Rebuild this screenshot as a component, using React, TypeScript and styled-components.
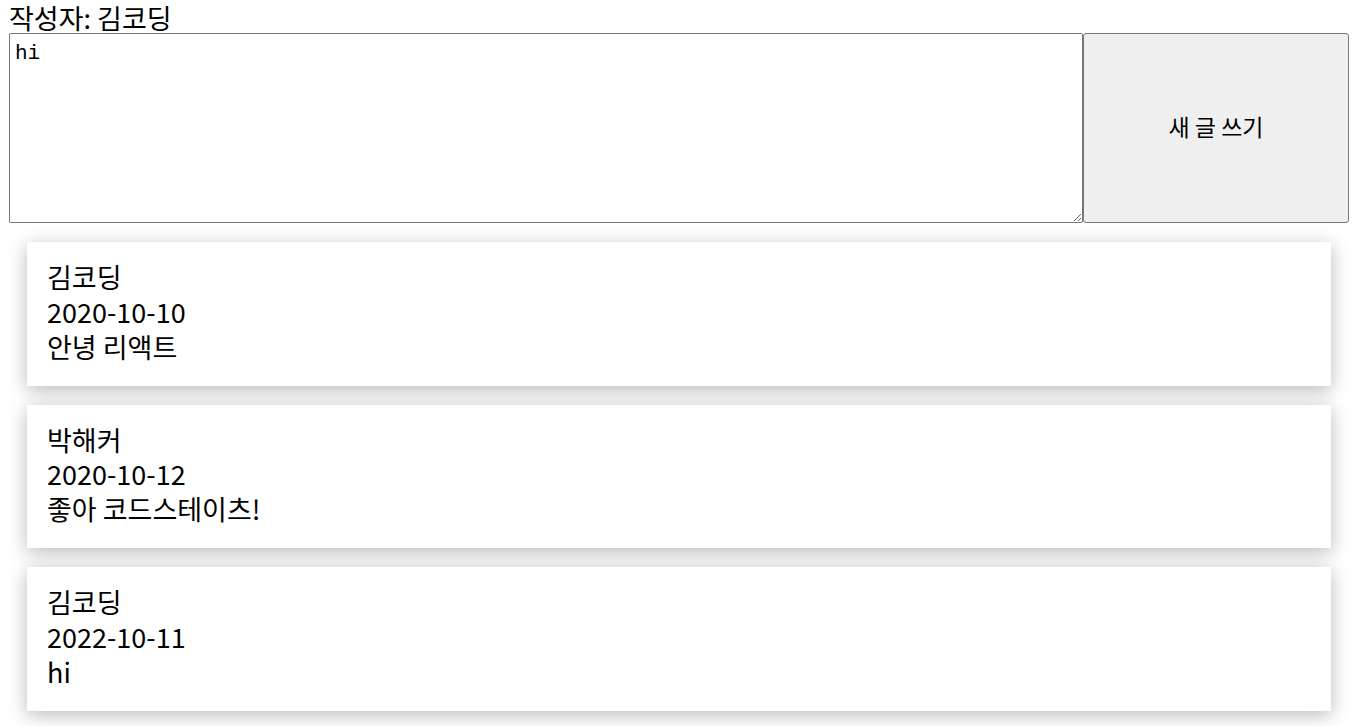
import React, { useState } from "react";
import styled, { createGlobalStyle } from "styled-components";

const GlobalStyle = createGlobalStyle`
  html, body {
    margin: 0;
    padding: 0;
    background: #ffffff;
  }
  body {
    font-family: "Noto Sans CJK KR", "Noto Sans", sans-serif;
    color: #000000;
  }
`;

const Page = styled.div`
  padding: 0 11px 0 9px;
  display: flex;
  flex-direction: column;
`;

const Author = styled.div`
  font-size: 27px;
  line-height: 33px;
  height: 33px;
  padding-top: 1px;
  box-sizing: border-box;
`;

const Composer = styled.div`
  display: flex;
  height: 190px;
`;

const TextArea = styled.textarea`
  flex: 1 1 auto;
  box-sizing: border-box;
  height: 190px;
  margin: 0;
  padding: 8px 5px 2px;
  font-family: "Liberation Mono", monospace;
  font-size: 21px;
  border: 1px solid #767676;
  border-radius: 2px;
  background: #ffffff;
  color: #000000;
  resize: both;
  outline: none;
`;

const WriteButton = styled.button`
  flex: 0 0 266px;
  box-sizing: border-box;
  height: 190px;
  margin: 0;
  padding: 0 0 4px;
  border: 1px solid #767676;
  border-radius: 3px;
  background: #efefef;
  color: #000000;
  font-family: "Noto Sans CJK KR", sans-serif;
  font-size: 23px;
`;

const List = styled.div`
  display: flex;
  flex-direction: column;
  gap: 19px;
  padding: 19px 18px 20px;
`;

const Card = styled.div`
  background: #ffffff;
  padding: 18px 20px 21.25px;
  font-size: 27px;
  line-height: 34.75px;
  box-shadow: 0 4px 18px rgba(0, 0, 0, 0.28);
`;

const Line = styled.div``;

const posts = [
  { author: "김코딩", date: "2020-10-10", body: "안녕 리액트" },
  { author: "박해커", date: "2020-10-12", body: "좋아 코드스테이츠!" },
  { author: "김코딩", date: "2022-10-11", body: "hi" },
];

export default function App() {
  const [text, setText] = useState("hi");
  return (
    <>
      <GlobalStyle />
      <Page>
        <Author>작성자: 김코딩</Author>
        <Composer>
          <TextArea value={text} onChange={(e) => setText(e.target.value)} />
          <WriteButton>새 글 쓰기</WriteButton>
        </Composer>
        <List>
          {posts.map((p, i) => (
            <Card key={i}>
              <Line>{p.author}</Line>
              <Line>{p.date}</Line>
              <Line>{p.body}</Line>
            </Card>
          ))}
        </List>
      </Page>
    </>
  );
}
